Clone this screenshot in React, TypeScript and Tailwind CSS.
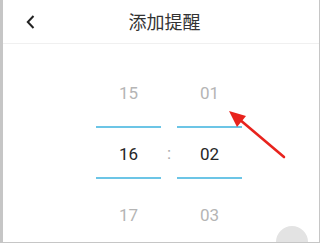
import React from "react";

const digit = "font-['Roboto','Liberation_Sans',sans-serif] text-[17px] leading-[20px] h-[20px] text-center";

function Column({ top, mid, bottom }: { top: string; mid: string; bottom: string }) {
  return (
    <div className="flex flex-col w-[65px]">
      <div className={`${digit} text-[#b5b5b5] mt-[39px]`}>{top}</div>
      <div className="h-[2px] bg-[#6cc5e6] mt-[23px]" />
      <div className={`${digit} text-[#262626] mt-[16px]`}>{mid}</div>
      <div className="h-[2px] bg-[#6cc5e6] mt-[13px]" />
      <div className={`${digit} text-[#b5b5b5] mt-[26px]`}>{bottom}</div>
    </div>
  );
}

export default function App() {
  return (
    <div className="relative w-[320px] h-[243px] overflow-hidden bg-white border-l-[3px] border-r border-b border-[#c6c6c6]">
      <div className="flex items-center h-[44px] border-b border-[#f0f0f0]">
        <div className="w-[50px] h-full flex items-center pl-[23px]">
          <svg width="9" height="14" viewBox="0 0 9 14" className="mt-[1px]">
            <polyline points="7.5,1 1.8,7 7.5,13" fill="none" stroke="#222" strokeWidth="2" />
          </svg>
        </div>
        <div className="flex-1 text-center text-[18px] leading-[24px] text-[#333333] font-['Noto_Sans_CJK_SC',sans-serif] -mt-[1px]">
          添加提醒
        </div>
        <div className="w-[43px]" />
      </div>
      <div className="flex ml-[93px]">
        <Column top="15" mid="16" bottom="17" />
        <div className="w-[16px] flex flex-col">
          <div className={`${digit} text-[#aaaaaa] text-[13px] mt-[99px]`}>:</div>
        </div>
        <Column top="01" mid="02" bottom="03" />
      </div>
      <svg className="absolute left-0 top-0 pointer-events-none" width="320" height="243" viewBox="0 0 320 243">
        <line x1="281" y1="157" x2="236" y2="119" stroke="#e8231d" strokeWidth="2.6" strokeLinecap="round" />
        <polygon points="226,111 243,116 234,127" fill="#e8231d" />
      </svg>
      <div className="absolute left-[273px] top-[226px] w-[32px] h-[32px] rounded-full bg-[#e3e3e3] flex items-center justify-center">
        <div className="w-[2px] h-[8px] bg-white rotate-[-40deg] mt-[12px]" />
      </div>
    </div>
  );
}
